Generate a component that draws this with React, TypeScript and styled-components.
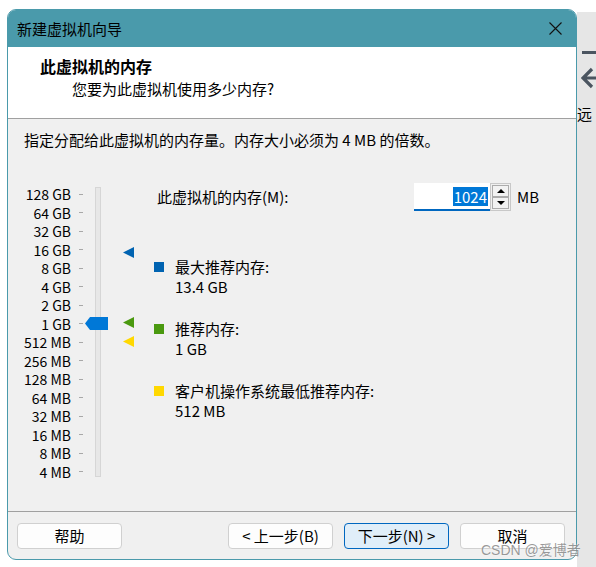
import styled, { createGlobalStyle } from 'styled-components';

const GlobalStyle = createGlobalStyle`
  html, body {
    margin: 0;
    padding: 0;
    background: #ffffff;
    overflow: hidden;
  }
  body {
    font-family: "Noto Sans CJK SC", "Noto Sans", sans-serif;
    font-size: 15px;
    color: #000;
  }
`;

const Page = styled.div`
  position: relative;
  display: flex;
  align-items: flex-start;
  width: 596px;
  height: 567px;
`;

const Window = styled.div`
  box-sizing: border-box;
  margin: 9px 0 0 7px;
  width: 570px;
  height: 551px;
  border: 1px solid #4a9aab;
  border-radius: 9px;
  overflow: hidden;
  display: flex;
  flex-direction: column;
  background: #f0f0f0;
`;

const TitleBar = styled.div`
  height: 37px;
  flex: none;
  background: #4a9aab;
  display: flex;
  align-items: center;
  justify-content: space-between;
  padding: 0 14px 0 9px;
  line-height: 20px;
`;

const CloseIcon = styled.svg`
  width: 13px;
  height: 13px;
`;

const Header = styled.div`
  flex: none;
  box-sizing: border-box;
  height: 72px;
  background: #ffffff;
  border-bottom: 1px solid #a0a0a0;
  padding: 9px 0 0 32px;
`;

const HeaderTitle = styled.div`
  font-size: 16px;
  font-weight: 700;
  line-height: 20px;
`;

const HeaderSub = styled.div`
  margin: 3px 0 0 32px;
  line-height: 20px;
`;

const Body = styled.div`
  flex: 1;
  padding: 11px 16px 0;
  display: flex;
  flex-direction: column;
`;

const Instruction = styled.div`
  line-height: 20px;
`;

const Main = styled.div`
  margin-top: 31px;
  display: flex;
`;

const SliderPanel = styled.div`
  position: relative;
  width: 130px;
  flex: none;
  display: flex;
  align-items: flex-start;
  padding-top: 4px;
`;

const Scale = styled.div`
  width: 59px;
  display: flex;
  flex-direction: column;
`;

const ScaleRow = styled.div`
  height: 18.5px;
  display: flex;
  align-items: center;
  justify-content: flex-end;
  gap: 8px;
  font-size: 14px;
  line-height: 16px;
  white-space: nowrap;
`;

const Tick = styled.span`
  width: 4px;
  height: 1px;
  background: #a8a8a8;
  flex: none;
`;

const Track = styled.div`
  box-sizing: border-box;
  margin: 2px 0 0 12px;
  width: 6px;
  height: 290px;
  background: #e7e7e7;
  border: 1px solid #d6d6d6;
`;

const Thumb = styled.div`
  position: absolute;
  left: 61px;
  top: 136px;
  width: 23px;
  height: 13px;
  background: #0078d7;
  clip-path: polygon(0 50%, 5px 0, 100% 0, 100% 100%, 5px 100%);
`;

const Marker = styled.div<{ $color: string; $top: number }>`
  position: absolute;
  left: 99px;
  top: ${(p) => p.$top}px;
  width: 11px;
  height: 11px;
  background: ${(p) => p.$color};
  clip-path: polygon(0 50%, 100% 0, 100% 100%);
`;

const Info = styled.div`
  flex: 1;
  display: flex;
  flex-direction: column;
`;

const MemoryRow = styled.div`
  height: 32px;
  display: flex;
  align-items: center;
  padding-left: 3px;
`;

const MemoryLabel = styled.div`
  width: 257px;
  line-height: 20px;
`;

const ValueBox = styled.div`
  box-sizing: border-box;
  width: 76px;
  height: 28px;
  background: #ffffff;
  border-bottom: 2px solid #0067c0;
  display: flex;
  align-items: center;
  justify-content: flex-end;
  padding-right: 2px;
`;

const Selected = styled.span`
  background: #0078d7;
  color: #ffffff;
  line-height: 19px;
  padding: 0 1px;
`;

const Spinner = styled.div`
  box-sizing: border-box;
  width: 21px;
  height: 28px;
  border: 1px solid #c8c8c8;
  padding: 1px;
  display: flex;
  flex-direction: column;
`;

const SpinButton = styled.div<{ $down?: boolean }>`
  box-sizing: border-box;
  height: 12px;
  border: 1px solid #acacac;
  background: #f2f2f2;
  display: flex;
  align-items: center;
  justify-content: center;
  &::after {
    content: '';
    border-left: 4px solid transparent;
    border-right: 4px solid transparent;
    ${(p) => (p.$down ? 'border-top: 4px solid #000;' : 'border-bottom: 4px solid #000;')}
  }
`;

const Unit = styled.span`
  margin-left: 6px;
  line-height: 20px;
`;

const Legend = styled.div`
  margin-top: 44px;
  display: flex;
  flex-direction: column;
  gap: 23px;
`;

const LegendItem = styled.div`
  display: flex;
  align-items: flex-start;
  gap: 11px;
`;

const Swatch = styled.span<{ $color: string }>`
  width: 10px;
  height: 10px;
  margin-top: 5px;
  flex: none;
  background: ${(p) => p.$color};
`;

const LegendText = styled.div`
  line-height: 19.5px;
`;

const Footer = styled.div`
  flex: none;
  height: 48px;
  box-sizing: border-box;
  border-top: 1px solid #a0a0a0;
  padding: 11px 11px 0 9px;
  display: flex;
  align-items: flex-start;
`;

const ButtonGroup = styled.div`
  margin-left: auto;
  display: flex;
  gap: 11px;
`;

const Button = styled.button<{ $primary?: boolean }>`
  box-sizing: border-box;
  width: 105px;
  height: 26px;
  padding: 0;
  font-family: inherit;
  font-size: 15px;
  line-height: 20px;
  color: #000;
  border-radius: 4px;
  border: 1px solid ${(p) => (p.$primary ? '#0067c0' : '#d0d0d0')};
  background: ${(p) => (p.$primary ? '#e0eef9' : '#fdfdfd')};
`;

const SideStrip = styled.div`
  flex: 1;
  align-self: stretch;
  margin-top: 12px;
  background: #e6e6e6;
  overflow: hidden;
  display: flex;
  flex-direction: column;
`;

const Dash = styled.div`
  margin: 39px 0 0 5px;
  height: 3px;
  background: #4b5560;
`;

const ArrowIcon = styled.svg`
  margin: 12px 0 0 4px;
  width: 24px;
  height: 24px;
  flex: none;
`;

const SideText = styled.div`
  margin-top: 14px;
  line-height: 20px;
  white-space: nowrap;
`;

const Watermark = styled.div`
  position: absolute;
  left: 481px;
  top: 541px;
  font-family: "Liberation Sans", "Noto Sans CJK SC", sans-serif;
  font-size: 14px;
  line-height: 18px;
  color: rgba(120, 120, 120, 0.75);
  text-shadow: 0 0 2px rgba(255, 255, 255, 0.9);
  white-space: nowrap;
`;

const scaleLabels = [
  '128 GB', '64 GB', '32 GB', '16 GB', '8 GB', '4 GB', '2 GB', '1 GB',
  '512 MB', '256 MB', '128 MB', '64 MB', '32 MB', '16 MB', '8 MB', '4 MB',
];

const legend = [
  { color: '#0063b1', label: '最大推荐内存:', value: '13.4 GB' },
  { color: '#4a990f', label: '推荐内存:', value: '1 GB' },
  { color: '#ffd800', label: '客户机操作系统最低推荐内存:', value: '512 MB' },
];

export default function App() {
  return (
    <Page>
      <GlobalStyle />
      <Window>
        <TitleBar>
          <span>新建虚拟机向导</span>
          <CloseIcon viewBox="0 0 13 13">
            <path d="M0.5 0.5 L12.5 12.5 M12.5 0.5 L0.5 12.5" stroke="#111" strokeWidth="1.1" />
          </CloseIcon>
        </TitleBar>
        <Header>
          <HeaderTitle>此虚拟机的内存</HeaderTitle>
          <HeaderSub>您要为此虚拟机使用多少内存?</HeaderSub>
        </Header>
        <Body>
          <Instruction>指定分配给此虚拟机的内存量。内存大小必须为 4 MB 的倍数。</Instruction>
          <Main>
            <SliderPanel>
              <Scale>
                {scaleLabels.map((l) => (
                  <ScaleRow key={l}>
                    {l}
                    <Tick />
                  </ScaleRow>
                ))}
              </Scale>
              <Track />
              <Thumb />
              <Marker $color="#0063b1" $top={66} />
              <Marker $color="#4a990f" $top={136} />
              <Marker $color="#ffd800" $top={155} />
            </SliderPanel>
            <Info>
              <MemoryRow>
                <MemoryLabel>此虚拟机的内存(M):</MemoryLabel>
                <ValueBox>
                  <Selected>1024</Selected>
                </ValueBox>
                <Spinner>
                  <SpinButton />
                  <SpinButton $down />
                </Spinner>
                <Unit>MB</Unit>
              </MemoryRow>
              <Legend>
                {legend.map((g) => (
                  <LegendItem key={g.label}>
                    <Swatch $color={g.color} />
                    <LegendText>
                      <div>{g.label}</div>
                      <div>{g.value}</div>
                    </LegendText>
                  </LegendItem>
                ))}
              </Legend>
            </Info>
          </Main>
        </Body>
        <Footer>
          <Button>帮助</Button>
          <ButtonGroup>
            <Button>&lt; 上一步(B)</Button>
            <Button $primary>下一步(N) &gt;</Button>
            <Button>取消</Button>
          </ButtonGroup>
        </Footer>
      </Window>
      <SideStrip>
        <Dash />
        <ArrowIcon viewBox="0 0 24 24">
          <path d="M11 3 L2 12 L11 21 M2 12 L24 12" fill="none" stroke="#4b5560" strokeWidth="3.2" />
        </ArrowIcon>
        <SideText>远</SideText>
      </SideStrip>
      <Watermark>CSDN @爱博者</Watermark>
    </Page>
  );
}
